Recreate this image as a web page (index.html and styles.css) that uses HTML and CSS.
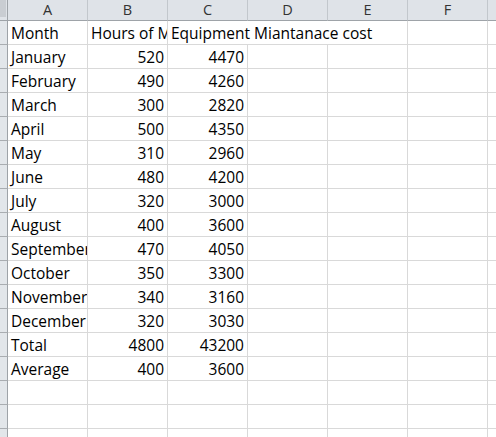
FILE: index.html
```html
<!DOCTYPE html>
<html>
<head>
<meta charset="utf-8">
<link rel="stylesheet" href="styles.css">
</head>
<body>
<div class="sheet">
  <div class="corner"><span class="tri"></span></div>
  <div class="ch">A</div><div class="ch">B</div><div class="ch">C</div><div class="ch">D</div><div class="ch">E</div><div class="ch">F</div><div class="ch last"></div>

  <div class="rh"></div><div class="c">Month</div><div class="c">Hours of Machine</div><div class="c spill">Equipment Miantanace cost</div><div class="c nob"></div><div class="c"></div><div class="c"></div><div class="c last"></div>
  <div class="rh"></div><div class="c">January</div><div class="c n">520</div><div class="c n">4470</div><div class="c"></div><div class="c"></div><div class="c"></div><div class="c last"></div>
  <div class="rh"></div><div class="c">February</div><div class="c n">490</div><div class="c n">4260</div><div class="c"></div><div class="c"></div><div class="c"></div><div class="c last"></div>
  <div class="rh"></div><div class="c">March</div><div class="c n">300</div><div class="c n">2820</div><div class="c"></div><div class="c"></div><div class="c"></div><div class="c last"></div>
  <div class="rh"></div><div class="c">April</div><div class="c n">500</div><div class="c n">4350</div><div class="c"></div><div class="c"></div><div class="c"></div><div class="c last"></div>
  <div class="rh"></div><div class="c">May</div><div class="c n">310</div><div class="c n">2960</div><div class="c"></div><div class="c"></div><div class="c"></div><div class="c last"></div>
  <div class="rh"></div><div class="c">June</div><div class="c n">480</div><div class="c n">4200</div><div class="c"></div><div class="c"></div><div class="c"></div><div class="c last"></div>
  <div class="rh"></div><div class="c">July</div><div class="c n">320</div><div class="c n">3000</div><div class="c"></div><div class="c"></div><div class="c"></div><div class="c last"></div>
  <div class="rh"></div><div class="c">August</div><div class="c n">400</div><div class="c n">3600</div><div class="c"></div><div class="c"></div><div class="c"></div><div class="c last"></div>
  <div class="rh"></div><div class="c">September</div><div class="c n">470</div><div class="c n">4050</div><div class="c"></div><div class="c"></div><div class="c"></div><div class="c last"></div>
  <div class="rh"></div><div class="c">October</div><div class="c n">350</div><div class="c n">3300</div><div class="c"></div><div class="c"></div><div class="c"></div><div class="c last"></div>
  <div class="rh"></div><div class="c">November</div><div class="c n">340</div><div class="c n">3160</div><div class="c"></div><div class="c"></div><div class="c"></div><div class="c last"></div>
  <div class="rh"></div><div class="c">December</div><div class="c n">320</div><div class="c n">3030</div><div class="c"></div><div class="c"></div><div class="c"></div><div class="c last"></div>
  <div class="rh"></div><div class="c">Total</div><div class="c n">4800</div><div class="c n">43200</div><div class="c"></div><div class="c"></div><div class="c"></div><div class="c last"></div>
  <div class="rh"></div><div class="c">Average</div><div class="c n">400</div><div class="c n">3600</div><div class="c"></div><div class="c"></div><div class="c"></div><div class="c last"></div>
  <div class="rh"></div><div class="c"></div><div class="c"></div><div class="c"></div><div class="c"></div><div class="c"></div><div class="c"></div><div class="c last"></div>
  <div class="rh"></div><div class="c"></div><div class="c"></div><div class="c"></div><div class="c"></div><div class="c"></div><div class="c"></div><div class="c last"></div>
  <div class="rh"></div><div class="c"></div><div class="c"></div><div class="c"></div><div class="c"></div><div class="c"></div><div class="c"></div><div class="c last"></div>
</div>
</body>
</html>
```
FILE: styles.css
```css
html, body {
  margin: 0;
  padding: 0;
  background: #ffffff;
  overflow: hidden;
}
.sheet {
  display: grid;
  grid-template-columns: 8px repeat(6, 80px) 1fr;
  grid-template-rows: 21px repeat(18, 24px);
  width: 496px;
  height: 437px;
  overflow: hidden;
  font-family: "Open Sans", "Liberation Sans", sans-serif;
  font-size: 15.5px;
  color: #000000;
}
.corner {
  background: #dfe3e8;
  border-right: 1px solid #9ea3a8;
  border-bottom: 1px solid #9ea3a8;
  box-sizing: border-box;
  position: relative;
}
.corner .tri {
  position: absolute;
  left: 0;
  top: 0;
  width: 6px;
  height: 17px;
  background: #c9cdd2;
}
.ch {
  background: #dfe3e8;
  border-right: 1px solid #c2c7cc;
  border-bottom: 1px solid #9ea3a8;
  box-sizing: border-box;
  display: flex;
  align-items: center;
  justify-content: center;
  font-size: 14.5px;
  color: #333333;
  line-height: 20px;
}
.ch.last {
  border-right: none;
}
.rh {
  background: #e2e6ea;
  border-right: 1px solid #9ea3a8;
  border-bottom: 1px solid #a9adb1;
  box-sizing: border-box;
}
.c {
  border-right: 1px solid #d9d9d9;
  border-bottom: 1px solid #d9d9d9;
  box-sizing: border-box;
  display: flex;
  align-items: flex-end;
  padding: 0 3px 1px 3px;
  line-height: 20px;
  white-space: nowrap;
  overflow: hidden;
}
.c.n {
  justify-content: flex-end;
}
.c.spill {
  overflow: visible;
  border-right: none;
  position: relative;
  z-index: 1;
}
.c.nob {
  border-right: none;
}
.c.last {
  border-right: none;
}
```
